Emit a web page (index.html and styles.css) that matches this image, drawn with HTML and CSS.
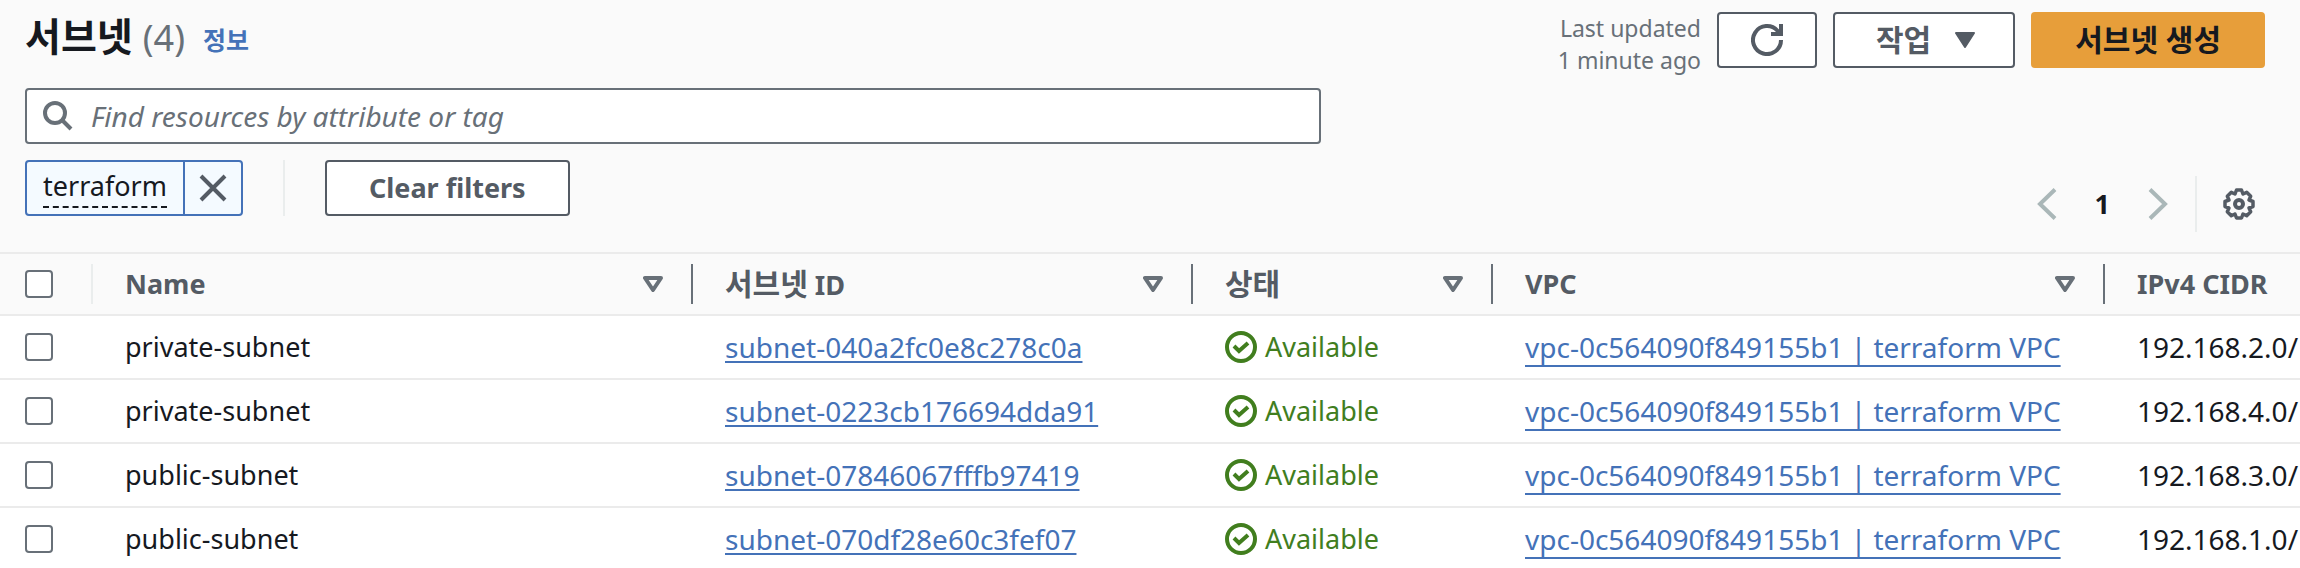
FILE: index.html
```html
<!DOCTYPE html>
<html lang="ko">
<head>
    <meta charset="UTF-8">
    <meta name="viewport" content="width=device-width, initial-scale=1.0">
    <title>서브넷</title>
    <link rel="stylesheet" href="styles.css">
</head>
<body>
    <svg class="sprite" aria-hidden="true">
        <symbol id="icon-sort" viewBox="0 0 20 16">
            <path d="M2 2h16l-8 12z" fill="none" stroke="currentColor" stroke-width="4" stroke-linejoin="round"/>
        </symbol>
        <symbol id="icon-check" viewBox="0 0 32 32">
            <circle cx="16" cy="16" r="14" fill="none" stroke="currentColor" stroke-width="4"/>
            <path d="M9 15l5 5 9-8" fill="none" stroke="currentColor" stroke-width="4"/>
        </symbol>
    </svg>

    <header class="panel-header">
        <div class="title-row">
            <h1 class="title">서브넷 <span class="count">(4)</span></h1>
            <a href="#info" class="info">정보</a>
            <div class="actions">
                <p class="updated">Last updated<br>1 minute ago</p>
                <button type="button" class="btn btn-icon" aria-label="Refresh">
                    <svg width="32" height="32" viewBox="0 0 32 32" fill="none" stroke="currentColor" stroke-width="4">
                        <path d="M30 16a14 14 0 1 1-3.500-9.200l2 2.200"/>
                        <path d="M30 0v10H20"/>
                    </svg>
                </button>
                <button type="button" class="btn btn-menu"><span class="ko">작업</span>
                    <svg width="20" height="16" viewBox="0 0 20 16"><path d="M1 1h18l-9 14z" fill="currentColor" stroke="currentColor" stroke-width="2" stroke-linejoin="round"/></svg>
                </button>
                <button type="button" class="btn btn-primary"><span class="ko">서브넷 생성</span></button>
            </div>
        </div>

        <label class="search">
            <svg width="30" height="30" viewBox="0 0 30 30" fill="none" stroke="currentColor" stroke-width="4">
                <circle cx="12" cy="12" r="10"/>
                <path d="M19 19l9 9"/>
            </svg>
            <input type="text" placeholder="Find resources by attribute or tag" aria-label="Find resources by attribute or tag">
        </label>

        <div class="filter-row">
            <div class="token">
                <span class="token-label"><span class="token-text">terraform</span></span>
                <button type="button" class="token-remove" aria-label="Remove filter">
                    <svg width="28" height="28" viewBox="0 0 28 28" fill="none" stroke="currentColor" stroke-width="4"><path d="M2 2l24 24M26 2L2 26"/></svg>
                </button>
            </div>
            <div class="clear">
                <button type="button" class="btn">Clear filters</button>
            </div>
            <nav class="pagination">
                <button type="button" class="page-arrow" aria-label="Previous page">
                    <svg width="20" height="32" viewBox="0 0 20 32" fill="none" stroke="currentColor" stroke-width="4"><path d="M18 1.500L3 16l15 14.500"/></svg>
                </button>
                <button type="button" class="page-number">1</button>
                <button type="button" class="page-arrow" aria-label="Next page">
                    <svg width="20" height="32" viewBox="0 0 20 32" fill="none" stroke="currentColor" stroke-width="4"><path d="M2 1.500L17 16 2 30.500"/></svg>
                </button>
                <button type="button" class="settings" aria-label="Preferences">
                    <svg width="32" height="32" viewBox="0 0 32 32" fill="none" stroke="currentColor" stroke-width="4" stroke-linejoin="round">
                        <path stroke-width="3.500" d="M30 13.500v5l-4 1.500 1.700 3.700-4 4-3.700-1.700-1.500 4h-5l-1.500-4-3.700 1.700-4-4L6 20l-4-1.500v-5L6 12 4.300 8.300l4-4L12 6l1.500-4h5L20 6l3.700-1.700 4 4L26 12z"/>
                        <circle cx="16" cy="16" r="4"/>
                    </svg>
                </button>
            </nav>
        </div>
    </header>

    <table class="subnets">
        <colgroup>
            <col class="col-select">
            <col class="col-name">
            <col class="col-id">
            <col class="col-state">
            <col class="col-vpc">
            <col class="col-cidr">
        </colgroup>
        <thead>
            <tr>
                <th class="select"><div class="head head-select"><input type="checkbox" aria-label="Select all"></div></th>
                <th><div class="head">Name <svg class="sort"><use href="#icon-sort"/></svg></div></th>
                <th><div class="head"><span><span class="ko">서브넷</span> ID</span> <svg class="sort"><use href="#icon-sort"/></svg></div></th>
                <th><div class="head"><span class="ko">상태</span> <svg class="sort"><use href="#icon-sort"/></svg></div></th>
                <th><div class="head">VPC <svg class="sort"><use href="#icon-sort"/></svg></div></th>
                <th><div class="head head-last">IPv4 CIDR</div></th>
            </tr>
        </thead>
        <tbody>
            <tr>
                <td class="select"><input type="checkbox" aria-label="Select subnet-040a2fc0e8c278c0a"></td>
                <td>private-subnet</td>
                <td class="code"><a href="#subnet-040a2fc0e8c278c0a">subnet-040a2fc0e8c278c0a</a></td>
                <td><span class="status"><svg><use href="#icon-check"/></svg>Available</span></td>
                <td class="code"><a href="#vpc" class="vpc">vpc-0c564090f849155b1 | terraform VPC</a></td>
                <td class="code">192.168.2.0/</td>
            </tr>
            <tr>
                <td class="select"><input type="checkbox" aria-label="Select subnet-0223cb176694dda91"></td>
                <td>private-subnet</td>
                <td class="code"><a href="#subnet-0223cb176694dda91">subnet-0223cb176694dda91</a></td>
                <td><span class="status"><svg><use href="#icon-check"/></svg>Available</span></td>
                <td class="code"><a href="#vpc" class="vpc">vpc-0c564090f849155b1 | terraform VPC</a></td>
                <td class="code">192.168.4.0/</td>
            </tr>
            <tr>
                <td class="select"><input type="checkbox" aria-label="Select subnet-07846067fffb97419"></td>
                <td>public-subnet</td>
                <td class="code"><a href="#subnet-07846067fffb97419">subnet-07846067fffb97419</a></td>
                <td><span class="status"><svg><use href="#icon-check"/></svg>Available</span></td>
                <td class="code"><a href="#vpc" class="vpc">vpc-0c564090f849155b1 | terraform VPC</a></td>
                <td class="code">192.168.3.0/</td>
            </tr>
            <tr>
                <td class="select"><input type="checkbox" aria-label="Select subnet-070df28e60c3fef07"></td>
                <td>public-subnet</td>
                <td class="code"><a href="#subnet-070df28e60c3fef07">subnet-070df28e60c3fef07</a></td>
                <td><span class="status"><svg><use href="#icon-check"/></svg>Available</span></td>
                <td class="code"><a href="#vpc" class="vpc">vpc-0c564090f849155b1 | terraform VPC</a></td>
                <td class="code">192.168.1.0/</td>
            </tr>
        </tbody>
    </table>
</body>
</html>
```
FILE: styles.css
```css
* {
    box-sizing: border-box;
}
body {
    margin: 0;
    font-family: "Noto Sans", "Noto Sans CJK KR", sans-serif;
    font-size: 27px;
    line-height: 40px;
    color: #16191f;
    background-color: #fafafa;
}
button, input {
    font: inherit;
    color: inherit;
}
button {
    cursor: pointer;
}
svg {
    display: block;
    flex-shrink: 0;
}
a {
    color: #4472b8;
}
.sprite {
    display: none;
}
.ko {
    font-size: 30px;
}

/* Header */
.panel-header {
    padding: 12px 35px 20px 25px;
}
.title-row {
    display: flex;
    align-items: flex-start;
}
.title {
    margin: 0;
    font-size: 39px;
    line-height: 48px;
    font-weight: 700;
}
.count {
    font-size: 36px;
    font-weight: 400;
    color: #687078;
}
.info {
    margin: 8px 0 0 18px;
    font-size: 25px;
    font-weight: 700;
    text-decoration: none;
}
.actions {
    display: flex;
    gap: 16px;
    margin-left: auto;
}
.updated {
    margin: 0;
    font-size: 23px;
    line-height: 32px;
    text-align: right;
    color: #687078;
}
.btn {
    display: flex;
    align-items: center;
    justify-content: center;
    height: 56px;
    padding: 0 42px;
    border: 2px solid #545b64;
    border-radius: 4px;
    background-color: #fff;
    color: #545b64;
    font-weight: 700;
}
.btn-icon {
    padding: 0 32px;
}
.btn-menu {
    gap: 24px;
    padding: 0 38px 0 41px;
}
.btn-primary {
    border-color: #e79e3a;
    background-color: #e79e3a;
    color: #16191f;
}

/* Search and filters */
.search {
    display: flex;
    align-items: center;
    gap: 18px;
    max-width: 1296px;
    height: 56px;
    margin-top: 12px;
    padding: 0 16px;
    border: 2px solid #687078;
    border-radius: 4px;
    background-color: #fff;
    color: #687078;
    font-size: 28px;
}
.search input {
    flex: 1;
    padding: 0;
    border: 0;
    outline: 0;
    background: none;
}
.search input::placeholder {
    color: #687078;
    font-style: italic;
    opacity: 1;
}
.filter-row {
    display: flex;
    align-items: flex-start;
    margin-top: 16px;
}
.token {
    display: flex;
    height: 56px;
    border: 2px solid #4472b8;
    border-radius: 4px;
    background-color: #f4faff;
}
.token-label {
    padding: 4px 16px;
}
.token-text {
    display: block;
    border-bottom: 2px dashed #16191f;
}
.token-remove {
    display: flex;
    align-items: center;
    padding: 0 14px;
    border: 0;
    border-left: 2px solid #4472b8;
    background: none;
    color: #545b64;
}
.clear {
    margin-left: 40px;
    padding-left: 40px;
    border-left: 2px solid #eaeded;
}
.pagination {
    display: flex;
    align-items: center;
    margin: 16px 0 0 auto;
}
.page-arrow, .page-number, .settings {
    display: flex;
    align-items: center;
    padding: 0;
    border: 0;
    background: none;
}
.page-arrow {
    color: #aab7b8;
}
.page-number {
    padding: 0 38px;
    font-weight: 700;
}
.settings {
    height: 56px;
    margin-left: 27px;
    padding: 0 10px 0 26px;
    border-left: 2px solid #eaeded;
    color: #545b64;
}

/* Table */
.subnets {
    width: 100%;
    table-layout: fixed;
    border-collapse: collapse;
    border-top: 2px solid #ebebeb;
}
.col-select {
    width: 93px;
}
.col-name {
    width: 600px;
}
.col-id {
    width: 500px;
}
.col-state {
    width: 300px;
}
.col-vpc {
    width: 612px;
}
th, td {
    height: 64px;
    padding: 0 0 0 32px;
    border-bottom: 2px solid #ebebeb;
    text-align: left;
    white-space: nowrap;
}
th {
    height: 62px;
    color: #545b64;
}
td {
    background-color: #fff;
}
.code {
    font-size: 28px;
}
.select {
    padding-left: 25px;
}
.head {
    display: flex;
    align-items: center;
    justify-content: space-between;
    height: 40px;
    padding-right: 28px;
    border-right: 2px solid #687078;
}
.head-select {
    border-right-color: #eaeded;
}
.head-last {
    padding: 0;
    border: 0;
}
.sort {
    width: 20px;
    height: 16px;
    color: #687078;
}
input[type="checkbox"] {
    display: block;
    width: 28px;
    height: 28px;
    margin: 0;
    border: 2px solid #687078;
    border-radius: 4px;
    background-color: #fff;
    appearance: none;
}
.status {
    display: flex;
    align-items: center;
    gap: 8px;
    color: #417e1e;
}
.status svg {
    width: 32px;
    height: 32px;
}
td a {
    text-decoration-thickness: 2px;
    text-underline-offset: 3px;
    text-decoration-skip-ink: none;
}
td .vpc {
    text-underline-offset: 7px;
}
```
